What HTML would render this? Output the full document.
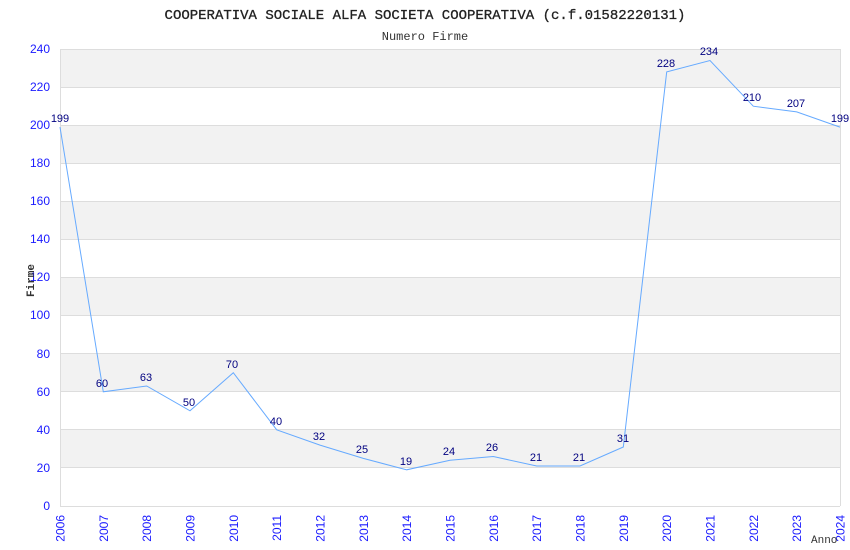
<!DOCTYPE html>
<html><head><meta charset="utf-8"><style>body{margin:0;background:#fff}svg{display:block}</style></head><body>
<svg width="850" height="550" xmlns="http://www.w3.org/2000/svg">
<rect width="850" height="550" fill="#fff"/>
<text x="425" y="19" text-anchor="middle" font-family="Liberation Mono, monospace" font-size="14" fill="#222" stroke="#222" stroke-width="0.3">COOPERATIVA SOCIALE ALFA SOCIETA COOPERATIVA (c.f.01582220131)</text>
<text x="425" y="40" text-anchor="middle" font-family="Liberation Mono, monospace" font-size="12" fill="#333">Numero Firme</text>
<g fill="#f2f2f2">
<rect x="60" y="49" width="780" height="38.1"/>
<rect x="60" y="125.2" width="780" height="38.1"/>
<rect x="60" y="201.3" width="780" height="38.1"/>
<rect x="60" y="277.5" width="780" height="38.1"/>
<rect x="60" y="353.7" width="780" height="38.1"/>
<rect x="60" y="429.8" width="780" height="38.1"/>
</g>
<g stroke="#ddd" stroke-width="1">
<line x1="60" y1="49.5" x2="840" y2="49.5"/><line x1="60" y1="87.5" x2="840" y2="87.5"/><line x1="60" y1="125.5" x2="840" y2="125.5"/><line x1="60" y1="163.5" x2="840" y2="163.5"/><line x1="60" y1="201.5" x2="840" y2="201.5"/><line x1="60" y1="239.5" x2="840" y2="239.5"/><line x1="60" y1="277.5" x2="840" y2="277.5"/><line x1="60" y1="315.5" x2="840" y2="315.5"/><line x1="60" y1="353.5" x2="840" y2="353.5"/><line x1="60" y1="391.5" x2="840" y2="391.5"/><line x1="60" y1="429.5" x2="840" y2="429.5"/><line x1="60" y1="467.5" x2="840" y2="467.5"/><line x1="60" y1="506.5" x2="840" y2="506.5"/>
<line x1="60.5" y1="49" x2="60.5" y2="506"/><line x1="840.5" y1="49" x2="840.5" y2="506"/>
</g>
<g font-family="Liberation Sans, sans-serif" font-size="12" fill="#1a1aff" text-anchor="end">
<text x="50" y="53">240</text><text x="50" y="91">220</text><text x="50" y="129">200</text><text x="50" y="167">180</text><text x="50" y="205">160</text><text x="50" y="243">140</text><text x="50" y="281">120</text><text x="50" y="319">100</text><text x="50" y="358">80</text><text x="50" y="396">60</text><text x="50" y="434">40</text><text x="50" y="472">20</text><text x="50" y="510">0</text>
</g>
<g font-family="Liberation Sans, sans-serif" font-size="12" fill="#1a1aff" text-anchor="end">
<text transform="translate(64.5,515) rotate(-90)">2006</text>
<text transform="translate(107.8,515) rotate(-90)">2007</text>
<text transform="translate(151.2,515) rotate(-90)">2008</text>
<text transform="translate(194.5,515) rotate(-90)">2009</text>
<text transform="translate(237.8,515) rotate(-90)">2010</text>
<text transform="translate(281.2,515) rotate(-90)">2011</text>
<text transform="translate(324.5,515) rotate(-90)">2012</text>
<text transform="translate(367.8,515) rotate(-90)">2013</text>
<text transform="translate(411.2,515) rotate(-90)">2014</text>
<text transform="translate(454.5,515) rotate(-90)">2015</text>
<text transform="translate(497.8,515) rotate(-90)">2016</text>
<text transform="translate(541.2,515) rotate(-90)">2017</text>
<text transform="translate(584.5,515) rotate(-90)">2018</text>
<text transform="translate(627.8,515) rotate(-90)">2019</text>
<text transform="translate(671.2,515) rotate(-90)">2020</text>
<text transform="translate(714.5,515) rotate(-90)">2021</text>
<text transform="translate(757.8,515) rotate(-90)">2022</text>
<text transform="translate(801.2,515) rotate(-90)">2023</text>
<text transform="translate(844.5,515) rotate(-90)">2024</text>
</g>
<text transform="translate(34,297) rotate(-90)" font-family="Liberation Mono, monospace" font-size="11" font-weight="bold" fill="#333">Firme</text>
<text x="811" y="543" font-family="Liberation Mono, monospace" font-size="11" fill="#333">Anno</text>
<polyline fill="none" stroke="#66aaff" stroke-width="1" points="60,127.1 103.3,391.8 146.7,386 190,410.8 233.3,372.7 276.7,429.8 320,445.1 363.3,458.4 406.7,469.8 450,460.3 493.3,456.5 536.7,466 580,466 623.3,447 666.7,71.9 710,60.5 753.3,106.2 796.7,111.9 840,127.1"/>
<g font-family="Liberation Sans, sans-serif" font-size="11" fill="#000080" text-anchor="middle">
<text x="60" y="122">199</text><text x="102" y="387">60</text><text x="146" y="381">63</text><text x="189" y="406">50</text><text x="232" y="368">70</text><text x="276" y="425">40</text><text x="319" y="440">32</text><text x="362" y="453">25</text><text x="406" y="465">19</text><text x="449" y="455">24</text><text x="492" y="451">26</text><text x="536" y="461">21</text><text x="579" y="461">21</text><text x="623" y="442">31</text><text x="666" y="67">228</text><text x="709" y="55">234</text><text x="752" y="101">210</text><text x="796" y="107">207</text><text x="840" y="122">199</text>
</g>
</svg>
</body></html>
